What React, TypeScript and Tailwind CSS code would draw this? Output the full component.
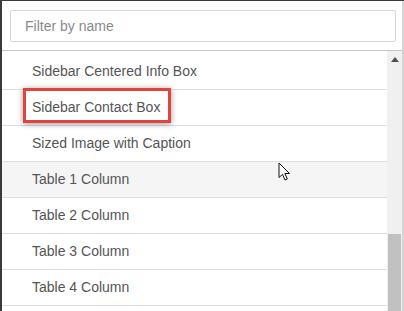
import React from 'react';

const ITEMS = [
  'Sidebar Centered Info Box',
  'Sidebar Contact Box',
  'Sized Image with Caption',
  'Table 1 Column',
  'Table 2 Column',
  'Table 3 Column',
  'Table 4 Column',
];

const App: React.FC = () => {
  return (
    <div className="w-[404px] h-[311px] overflow-hidden bg-white border-l-2 border-t border-[#3a3a3a] font-['Liberation_Sans',Arial,sans-serif] text-[14px] text-[#555]">
      <div className="h-full border-r-2 border-[#d4d4d4] flex flex-col">
        {/* Filter */}
        <div className="h-[50px] shrink-0 border-b border-[#c6c6c6] pt-[9px] pl-[8px] pr-[6px]">
          <input
            type="text"
            placeholder="Filter by name"
            className="w-full h-[32px] border border-[#d6d6d6] rounded-[2px] px-[14px] text-[14px] text-[#555] placeholder:text-[#8a8a8a] outline-none"
          />
        </div>

        {/* List + scrollbar */}
        <div className="flex-1 flex min-h-0">
          <ul className="flex-1 pt-[3px] overflow-hidden">
            {ITEMS.map((name, i) => (
              <li
                key={name}
                className={`h-[36px] border-b border-[#dedede] flex items-center pl-[30px] relative ${
                  i === 3 ? 'bg-[#f5f5f5]' : ''
                }`}
              >
                {i === 1 && (
                  <span className="absolute left-[21px] top-[-2px] w-[148px] h-[35px] border-[3px] border-[#e3423f] shadow-[0_1px_6px_rgba(0,0,0,0.4)]" />
                )}
                <span className="relative">{name}</span>
                {i === 3 && (
                  <svg
                    className="absolute left-[276px] top-[0px]"
                    width="13"
                    height="20"
                    viewBox="0 0 13 20"
                  >
                    <path
                      d="M1 1 L1 15.5 L4.5 12.3 L7 18 L9.3 17 L6.9 11.5 L11.5 11.5 Z"
                      fill="white"
                      stroke="#111"
                      strokeWidth="1"
                      strokeLinejoin="round"
                    />
                  </svg>
                )}
              </li>
            ))}
          </ul>

          {/* Scrollbar */}
          <div className="w-[15px] bg-[#f0f0f0] flex flex-col items-center pt-[6px]">
            <svg width="8" height="5" viewBox="0 0 8 5">
              <path d="M4 0 L8 5 L0 5 Z" fill="#505050" />
            </svg>
            <div className="mt-[172px] w-[13px] flex-1 bg-[#c1c1c1]" />
          </div>
        </div>
      </div>
    </div>
  );
};

export default App;
